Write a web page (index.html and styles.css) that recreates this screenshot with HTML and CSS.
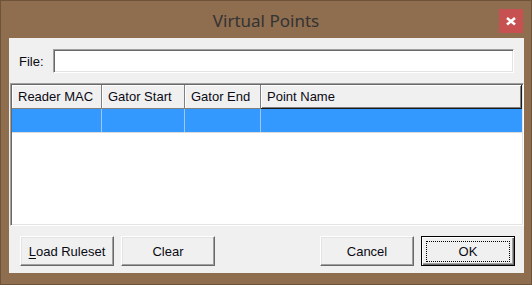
FILE: index.html
```html
<!DOCTYPE html>
<html>
<head>
<meta charset="utf-8">
<title>Virtual Points</title>
<link rel="stylesheet" href="styles.css">
</head>
<body>
<div class="window">
  <div class="titlebar">
    <span class="spacer"></span>
    <div class="title">Virtual Points</div>
    <div class="close">
      <svg width="24" height="24" viewBox="0 0 24 24"><path d="M8 9 L16 15.5 M16 9 L8 15.5" stroke="#fff" stroke-width="2.6" stroke-linecap="butt" fill="none"/></svg>
    </div>
  </div>
  <div class="client">
    <div class="file-row">
      <span class="label">File:</span>
      <div class="textbox"></div>
    </div>
    <div class="list">
      <div class="row header">
        <div class="hcell c1">Reader MAC</div>
        <div class="hcell c2">Gator Start</div>
        <div class="hcell c3">Gator End</div>
        <div class="hcell c4 last">Point Name</div>
      </div>
      <div class="row selected">
        <div class="cell c1"></div>
        <div class="cell c2"></div>
        <div class="cell c3"></div>
        <div class="cell c4"></div>
      </div>
    </div>
    <div class="buttons">
      <div class="btn"><span><u>L</u>oad Ruleset</span></div>
      <div class="btn">Clear</div>
      <span class="fill"></span>
      <div class="btn">Cancel</div>
      <div class="btn default"><span class="focus">OK</span></div>
    </div>
  </div>
</div>
</body>
</html>
```
FILE: styles.css
```css
html, body {
  margin: 0;
  padding: 0;
  background: #8f6d4f;
}
.window {
  box-sizing: border-box;
  width: 532px;
  height: 285px;
  background: #8f6d4f;
  border: 1px solid #6f5339;
  display: flex;
  flex-direction: column;
  font-family: "Liberation Sans", Arial, sans-serif;
  font-size: 13px;
  color: #0a0a14;
}
.titlebar {
  height: 37px;
  display: flex;
  align-items: flex-start;
  padding: 0 8px;
  flex: none;
}
.spacer { width: 24px; flex: none; }
.title {
  flex: 1;
  text-align: center;
  font-family: "Noto Sans", "Open Sans", sans-serif;
  font-size: 17px;
  color: #333;
  line-height: 20px;
  padding-top: 10px;
}
.close {
  width: 24px;
  height: 24px;
  margin-top: 8px;
  background: #c75050;
  flex: none;
}
.close svg { display: block; }
.client {
  flex: 1;
  margin: 0 7px 11px 8px;
  background: #f0f0f0;
  padding: 11px 0 7px 0;
  display: flex;
  flex-direction: column;
}
.file-row {
  display: flex;
  align-items: center;
  height: 24px;
  margin: 0 10px 0 10px;
}
.label {
  width: 34px;
  flex: none;
}
.textbox {
  flex: 1;
  height: 24px;
  box-sizing: border-box;
  background: #fff;
  border: 1px solid;
  border-color: #a0a0a0 #fff #fff #a0a0a0;
  box-shadow: inset 1px 1px #696969, inset -1px -1px #e3e3e3;
}
.list {
  margin: 10px 0 0 1px;
  width: 514px;
  height: 143px;
  box-sizing: border-box;
  background: #fff;
  border: 1px solid;
  border-color: #a0a0a0 #fff #fff #a0a0a0;
  box-shadow: inset 1px 1px #696969, inset -1px -1px #e3e3e3;
  padding: 1px;
  display: flex;
  flex-direction: column;
}
.row {
  display: flex;
  flex: none;
}
.c1 { width: 90px; }
.c2 { width: 83px; }
.c3 { width: 76px; }
.c4 { flex: 1; }
.header { height: 24px; }
.hcell {
  box-sizing: border-box;
  height: 24px;
  background: #f0f0f0;
  border-right: 1px solid #808080;
  border-bottom: 1px solid #808080;
  box-shadow: inset 1px 1px #fff;
  padding-left: 6px;
  display: flex;
  align-items: center;
  white-space: nowrap;
  flex: none;
}
.hcell.c4 { flex: 1; }
.hcell.last {
  border-right: 1px solid #1a1a1a;
  border-bottom: 1px solid #1a1a1a;
  box-shadow: inset 1px 1px #fff, inset -1px -1px #808080;
}
.selected {
  height: 24px;
  box-sizing: border-box;
  border-bottom: 1px solid #dcdcdc;
}
.cell {
  box-sizing: border-box;
  height: 23px;
  background: #3399ff;
  border-right: 1px solid #a3c6ea;
  flex: none;
}
.cell.c4 { flex: 1; border-right: none; }
.buttons {
  margin: 10px 9px 0 11px;
  height: 30px;
  display: flex;
  gap: 7px;
}
.fill { flex: 1; }
.btn {
  width: 94px;
  height: 30px;
  box-sizing: border-box;
  background: #f0f0f0;
  border: 1px solid;
  border-color: #fff #696969 #696969 #fff;
  box-shadow: inset -1px -1px #a0a0a0, inset 1px 1px #e3e3e3;
  display: flex;
  align-items: center;
  justify-content: center;
  flex: none;
}
.btn u { text-decoration: underline; text-underline-offset: 2px; }
.btn.default {
  border: 1px solid #000;
  box-shadow: inset 1px 1px #fff, inset -1px -1px #696969, inset -2px -2px #a0a0a0;
  padding: 4px 4px 3px 4px;
}
.focus {
  flex: 1;
  align-self: stretch;
  border: 1px dotted #000;
  display: flex;
  align-items: center;
  justify-content: center;
}
```
